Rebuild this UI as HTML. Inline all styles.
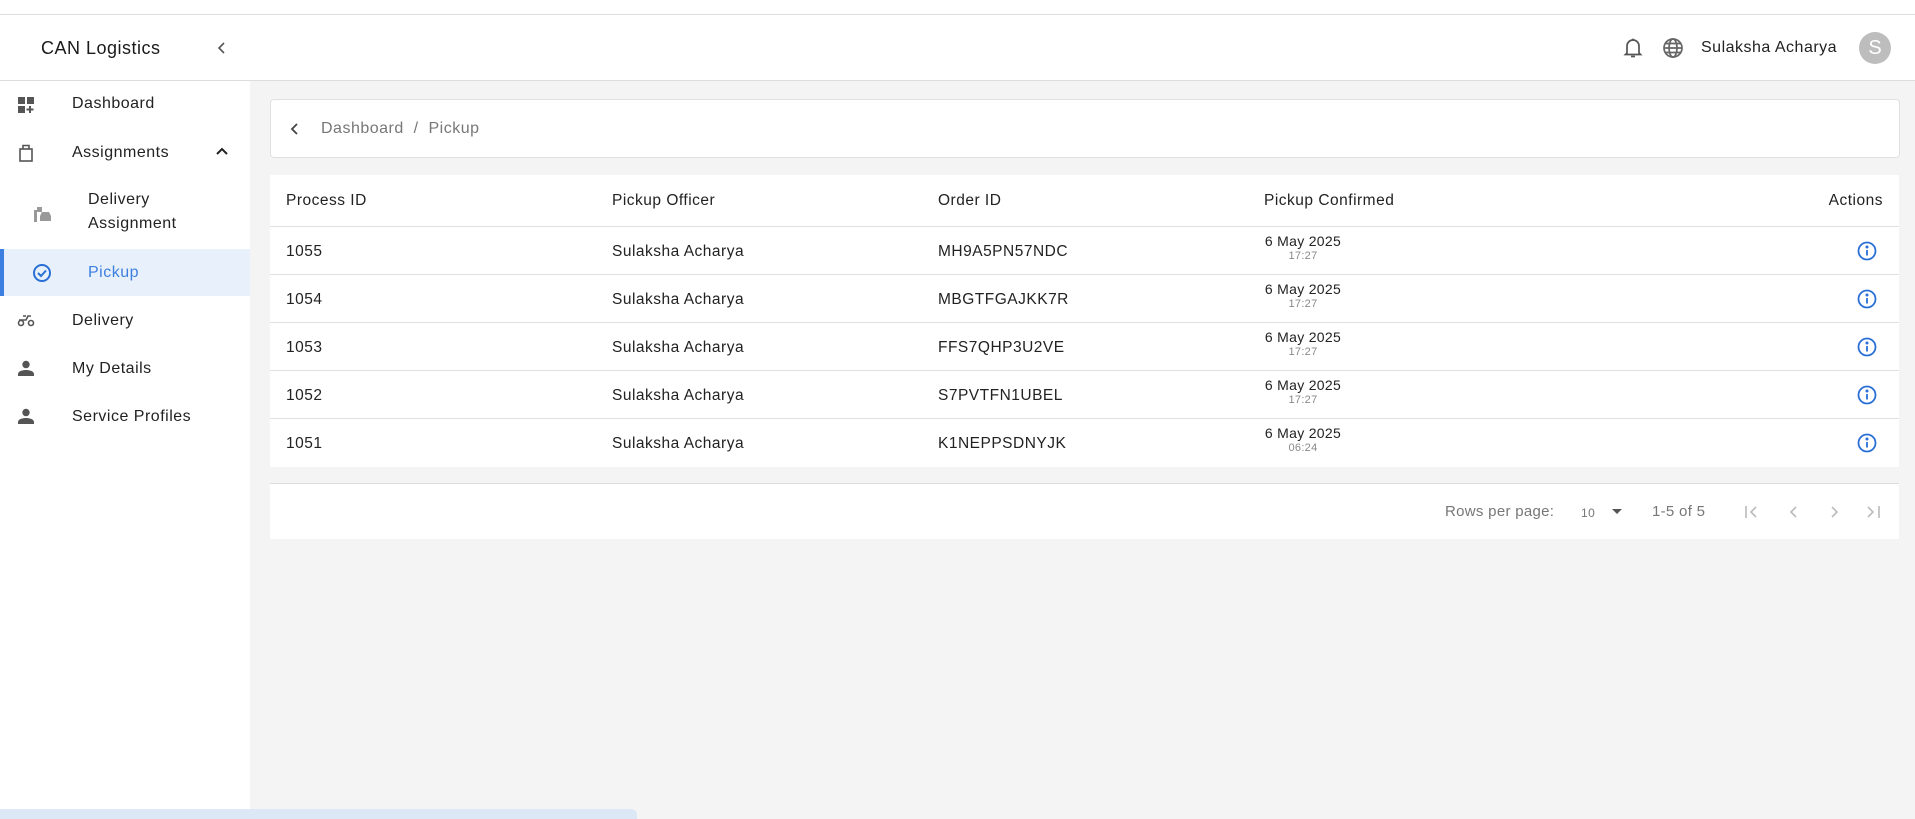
<!DOCTYPE html>
<html><head><meta charset="utf-8"><style>
*{margin:0;padding:0;box-sizing:border-box}
body{width:1915px;height:819px;overflow:hidden;background:#f4f4f4;font-family:"Liberation Sans",sans-serif;color:#222;position:relative;letter-spacing:0.5px}
.a{position:absolute;white-space:nowrap}
.hdr{position:absolute;left:0;width:1915px;background:#fff;border-top:1px solid #ddd;border-bottom:1px solid #ddd;top:14px;height:67px}
.top{position:absolute;left:0;top:0;width:1915px;height:14px;background:#fff}
.side{position:absolute;left:0;top:81px;width:250px;height:738px;background:#fff}
.nav{font-size:16px;color:#222}
.card{position:absolute;background:#fff}
.row{position:absolute;left:0;width:1629px;height:48px;border-top:1px solid #e0e0e0}
.c{position:absolute;font-size:15.5px;color:#222;top:16px}
.d{position:absolute;left:994px;top:6px;width:78px;text-align:center;font-size:14px;letter-spacing:0.3px}
.d span{display:block;font-size:11px;color:#888;margin-top:1px}
</style></head><body>
<div class="top"></div>
<div class="hdr"></div>
<div class="a" style="left:41px;top:38px;font-size:18px;color:#1a1a1a">CAN Logistics</div>
<svg class="a" style="left:215px;top:41px" width="14" height="14" viewBox="0 0 14 14"><path d="M9 2L4 7l5 5" fill="none" stroke="#555" stroke-width="1.6"/></svg>
<svg class="a" style="left:1623px;top:37px" width="20" height="22" viewBox="0 0 20 22"><path d="M4 16V9a6 6 0 0112 0v7l1.5 1.5h-15z" fill="none" stroke="#555" stroke-width="1.7"/><path d="M8 19.5h4" stroke="#555" stroke-width="1.7"/><circle cx="10" cy="2.5" r="1" fill="#555"/></svg>
<svg class="a" style="left:1662px;top:37px" width="22" height="22" viewBox="0 0 22 22" fill="none" stroke="#666" stroke-width="1.7"><circle cx="11" cy="11" r="9"/><ellipse cx="11" cy="11" rx="4" ry="9"/><path d="M2 11h18M3.5 6.5h15M3.5 15.5h15"/></svg>
<div class="a" style="left:1701px;top:39px;font-size:16px;color:#222">Sulaksha Acharya</div>
<div class="a" style="left:1859px;top:32px;width:32px;height:32px;border-radius:50%;background:#bdbdbd;color:#fff;font-size:20px;text-align:center;line-height:32px;letter-spacing:0">S</div>

<div class="side"></div>
<svg class="a" style="left:18px;top:97px" width="16" height="16" viewBox="0 0 16 16" fill="#555"><rect x="0" y="0" width="7" height="7"/><rect x="9" y="0" width="7" height="7"/><rect x="0" y="9" width="7" height="7"/><path d="M12 9v7M8.5 12.5h7" stroke="#555" stroke-width="2"/></svg>
<div class="a nav" style="left:72px;top:95px">Dashboard</div>
<svg class="a" style="left:19px;top:144px" width="14" height="18" viewBox="0 0 14 18" fill="none" stroke="#555" stroke-width="1.6"><rect x="1" y="5" width="12" height="12"/><path d="M4 5V1.5h6V5"/></svg>
<div class="a nav" style="left:72px;top:144px">Assignments</div>
<svg class="a" style="left:215px;top:146px" width="14" height="10" viewBox="0 0 14 10"><path d="M2 8l5-5 5 5" fill="none" stroke="#222" stroke-width="2"/></svg>
<svg class="a" style="left:32px;top:204px" width="20" height="20" viewBox="0 0 20 20" fill="#999"><rect x="2" y="6" width="3" height="12"/><rect x="5" y="3" width="5" height="5"/><path d="M8 12l2-4h7l2 4v5H8z"/></svg>
<div class="a nav" style="left:88px;top:191px">Delivery</div>
<div class="a nav" style="left:88px;top:215px">Assignment</div>
<div class="a" style="left:0;top:249px;width:250px;height:47px;background:#e8f1fb"></div>
<div class="a" style="left:0;top:249px;width:4px;height:47px;background:#3d7fe0"></div>
<svg class="a" style="left:32px;top:263px" width="20" height="20" viewBox="0 0 20 20" fill="none" stroke="#2a6fd6" stroke-width="2"><circle cx="10" cy="10" r="8"/><path d="M6 10l3 3 5-5.5"/></svg>
<div class="a nav" style="left:88px;top:264px;color:#3d7fe0">Pickup</div>
<svg class="a" style="left:17px;top:313px" width="18" height="14" viewBox="0 0 18 14" fill="none" stroke="#555" stroke-width="1.6"><circle cx="4" cy="10" r="2.5"/><circle cx="14" cy="10" r="2.5"/><path d="M2 7h7l2-4h3M6 3h3"/></svg>
<div class="a nav" style="left:72px;top:312px">Delivery</div>
<svg class="a" style="left:18px;top:360px" width="16" height="16" viewBox="0 0 16 16" fill="#555"><circle cx="8" cy="4.5" r="3.7"/><path d="M0 16v-2c0-3 5-4 8-4s8 1 8 4v2z"/></svg>
<div class="a nav" style="left:72px;top:360px">My Details</div>
<svg class="a" style="left:18px;top:408px" width="16" height="16" viewBox="0 0 16 16" fill="#555"><circle cx="8" cy="4.5" r="3.7"/><path d="M0 16v-2c0-3 5-4 8-4s8 1 8 4v2z"/></svg>
<div class="a nav" style="left:72px;top:408px">Service Profiles</div>
<div class="a" style="left:0;top:809px;width:637px;height:10px;background:#dde8f7;border-radius:0 6px 0 0"></div>

<div class="card" style="left:270px;top:99px;width:1630px;height:59px;border:1px solid #e0e0e0;border-radius:4px"></div>
<svg class="a" style="left:289px;top:122px" width="12" height="14" viewBox="0 0 12 14"><path d="M8 2L3 7l5 5" fill="none" stroke="#444" stroke-width="1.8"/></svg>
<div class="a" style="left:321px;top:120px;font-size:16px;color:#777">Dashboard&nbsp;&nbsp;/&nbsp;&nbsp;Pickup</div>

<div class="card" style="left:270px;top:175px;width:1629px;height:292px">
<div class="c" style="left:16px;top:17px">Process ID</div>
<div class="c" style="left:342px;top:17px">Pickup Officer</div>
<div class="c" style="left:668px;top:17px">Order ID</div>
<div class="c" style="left:994px;top:17px">Pickup Confirmed</div>
<div class="c" style="right:16px;top:17px">Actions</div>

<div class="row" style="top:51px"><div class="c" style="left:16px">1055</div><div class="c" style="left:342px">Sulaksha Acharya</div><div class="c" style="left:668px">MH9A5PN57NDC</div><div class="d">6 May 2025<span>17:27</span></div><svg class="a" style="left:1587px;top:14px" width="20" height="20" viewBox="0 0 20 20" fill="none" stroke="#2a6fd6" stroke-width="1.8"><circle cx="10" cy="10" r="8.5"/><path d="M10 9v5.5"/><circle cx="10" cy="6" r=".6" fill="#2a6fd6"/></svg></div>
<div class="row" style="top:99px"><div class="c" style="left:16px">1054</div><div class="c" style="left:342px">Sulaksha Acharya</div><div class="c" style="left:668px">MBGTFGAJKK7R</div><div class="d">6 May 2025<span>17:27</span></div><svg class="a" style="left:1587px;top:14px" width="20" height="20" viewBox="0 0 20 20" fill="none" stroke="#2a6fd6" stroke-width="1.8"><circle cx="10" cy="10" r="8.5"/><path d="M10 9v5.5"/><circle cx="10" cy="6" r=".6" fill="#2a6fd6"/></svg></div>
<div class="row" style="top:147px"><div class="c" style="left:16px">1053</div><div class="c" style="left:342px">Sulaksha Acharya</div><div class="c" style="left:668px">FFS7QHP3U2VE</div><div class="d">6 May 2025<span>17:27</span></div><svg class="a" style="left:1587px;top:14px" width="20" height="20" viewBox="0 0 20 20" fill="none" stroke="#2a6fd6" stroke-width="1.8"><circle cx="10" cy="10" r="8.5"/><path d="M10 9v5.5"/><circle cx="10" cy="6" r=".6" fill="#2a6fd6"/></svg></div>
<div class="row" style="top:195px"><div class="c" style="left:16px">1052</div><div class="c" style="left:342px">Sulaksha Acharya</div><div class="c" style="left:668px">S7PVTFN1UBEL</div><div class="d">6 May 2025<span>17:27</span></div><svg class="a" style="left:1587px;top:14px" width="20" height="20" viewBox="0 0 20 20" fill="none" stroke="#2a6fd6" stroke-width="1.8"><circle cx="10" cy="10" r="8.5"/><path d="M10 9v5.5"/><circle cx="10" cy="6" r=".6" fill="#2a6fd6"/></svg></div>
<div class="row" style="top:243px;height:49px"><div class="c" style="left:16px">1051</div><div class="c" style="left:342px">Sulaksha Acharya</div><div class="c" style="left:668px">K1NEPPSDNYJK</div><div class="d">6 May 2025<span>06:24</span></div><svg class="a" style="left:1587px;top:14px" width="20" height="20" viewBox="0 0 20 20" fill="none" stroke="#2a6fd6" stroke-width="1.8"><circle cx="10" cy="10" r="8.5"/><path d="M10 9v5.5"/><circle cx="10" cy="6" r=".6" fill="#2a6fd6"/></svg></div>
</div>

<div class="card" style="left:270px;top:483px;width:1629px;height:56px;border-top:1px solid #ddd"></div>
<div class="a" style="left:1445px;top:503px;font-size:15px;color:#777;letter-spacing:0.3px">Rows per page:</div>
<div class="a" style="left:1581px;top:506px;font-size:12px;color:#777">10</div>
<svg class="a" style="left:1612px;top:509px" width="10" height="6" viewBox="0 0 10 6"><path d="M0 0h10L5 5z" fill="#555"/></svg>
<div class="a" style="left:1652px;top:503px;font-size:15px;color:#777;letter-spacing:0.3px">1-5 of 5</div>
<svg class="a" style="left:1744px;top:504px" width="140" height="16" viewBox="0 0 140 16" fill="none" stroke="#bbb" stroke-width="1.6"><path d="M2 2v12M12 3L7 8l5 5"/><path d="M52 3L47 8l5 5"/><path d="M88 3l5 5-5 5"/><path d="M124 3l5 5-5 5M135 2v12"/></svg>
</body></html>
